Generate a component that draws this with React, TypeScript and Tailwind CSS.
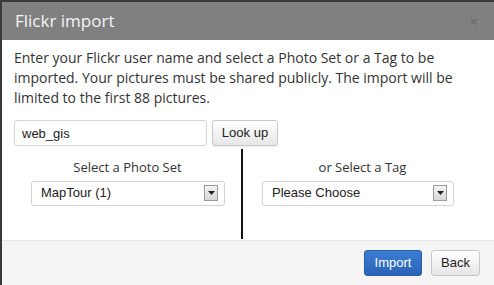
import React, { useState } from "react";

const SelectBox = ({ value, width }: { value: string; width: string }) => (
  <div
    className={`flex h-[25px] ${width} items-center justify-between rounded-[3px] border border-[#d4d4d4] bg-white pl-[9px] pr-[6px] font-['Liberation_Sans',Arial,sans-serif] text-[13px] text-[#222]`}
  >
    <span>{value}</span>
    <span className="flex h-[16px] w-[14px] items-center justify-center border border-[#9a9a9a] bg-gradient-to-b from-[#f4f4f4] to-[#d6d6d6]">
      <svg width="7" height="4" viewBox="0 0 7 4">
        <path d="M0 0h7L3.5 4z" fill="#222" />
      </svg>
    </span>
  </div>
);

const App = () => {
  const [user, setUser] = useState("web_gis");

  return (
    <div className="h-[285px] w-[494px] overflow-hidden bg-[#3a3a3a] pl-[2px] pt-[2px] font-['Open_Sans',sans-serif]">
      <div className="flex h-full w-full flex-col bg-white">
        {/* header */}
        <div className="flex h-[38px] items-center justify-between bg-[#808080] pl-[13px] pr-[16px]">
          <h3 className="text-[17px] text-[#f4f4f4]">Flickr import</h3>
          <span className="text-[15px] font-bold leading-none text-[#6e6e6e]">×</span>
        </div>

        {/* body */}
        <div className="flex-1 px-[12px] pt-[8px]">
          <p className="text-[14px] leading-[20px] text-[#333]">
            Enter your Flickr user name and select a Photo Set or a Tag to be imported. Your pictures must be shared publicly. The import will be limited to the first 88 pictures.
          </p>

          <div className="mt-[12px] flex gap-[5px]">
            <input
              value={user}
              onChange={(e) => setUser(e.target.value)}
              className="h-[26px] w-[193px] rounded-[3px] border border-[#d4d4d4] px-[7px] font-['Liberation_Sans',Arial,sans-serif] text-[13px] text-[#222] outline-none"
            />
            <button className="h-[26px] w-[66px] rounded-[3px] border border-[#c8c8c8] bg-gradient-to-b from-white to-[#e6e6e6] font-['Liberation_Sans',Arial,sans-serif] text-[13px] text-[#222] shadow-[0_1px_1px_rgba(0,0,0,0.08)]">
              Look up
            </button>
          </div>

          <div className="flex h-[93px]">
            <div className="flex w-[227px] flex-col pt-[12px]">
              <div className="text-center text-[13px] text-[#333]">Select a Photo Set</div>
              <div className="ml-[17px] mt-[3px]">
                <SelectBox value="MapTour (1)" width="w-[194px]" />
              </div>
            </div>
            <div className="mt-[3px] h-[90px] w-[2px] bg-[#111]" />
            <div className="flex flex-1 flex-col pt-[12px]">
              <div className="text-center text-[13px] text-[#333]">or Select a Tag</div>
              <div className="ml-[19px] mt-[3px]">
                <SelectBox value="Please Choose" width="w-[192px]" />
              </div>
            </div>
          </div>
        </div>

        {/* footer */}
        <div className="flex h-[45px] items-center justify-end gap-[9px] border-t border-[#e5e5e5] bg-[#f5f5f5] pr-[14px]">
          <button className="h-[26px] w-[58px] rounded-[3px] border border-[#2a5ea8] bg-gradient-to-b from-[#3b7dd4] to-[#2b63b4] font-['Liberation_Sans',Arial,sans-serif] text-[13px] text-white">
            Import
          </button>
          <button className="h-[26px] w-[49px] rounded-[3px] border border-[#c8c8c8] bg-gradient-to-b from-white to-[#e6e6e6] font-['Liberation_Sans',Arial,sans-serif] text-[13px] text-[#222]">
            Back
          </button>
        </div>
      </div>
    </div>
  );
};

export default App;
